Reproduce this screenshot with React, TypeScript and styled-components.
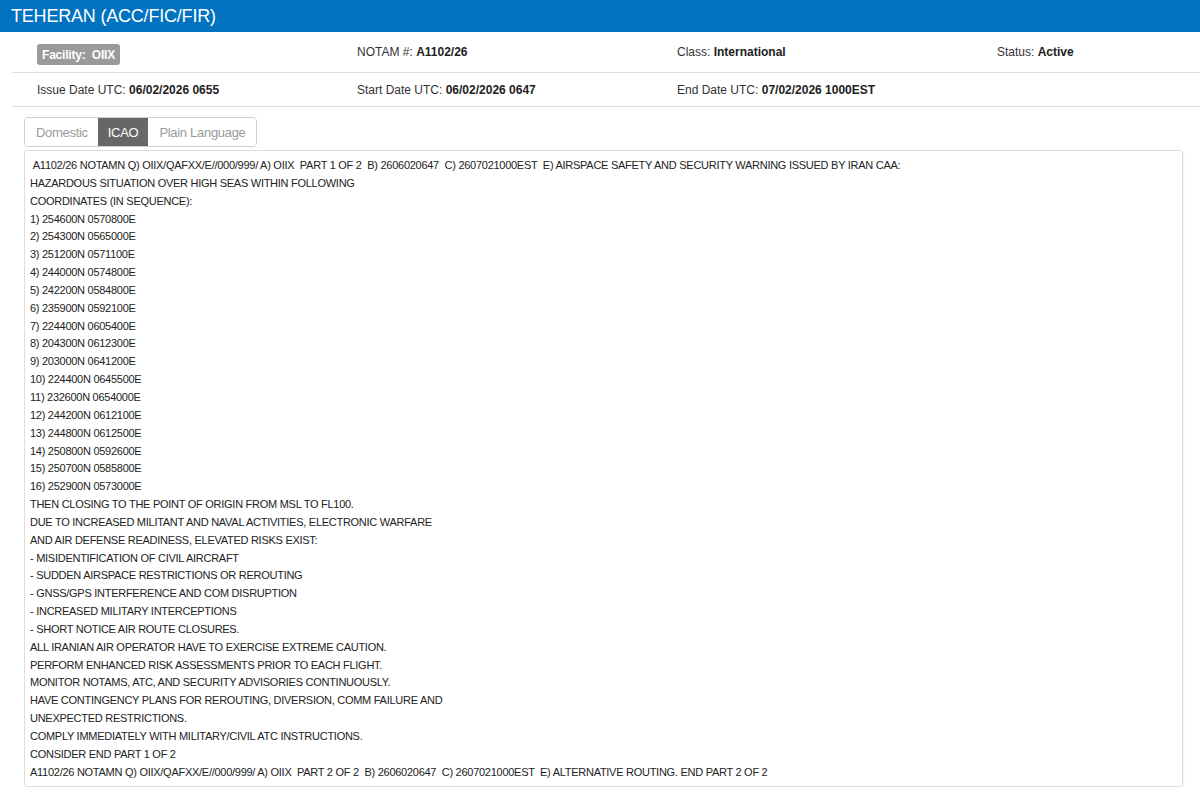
import React from "react";
import styled, { createGlobalStyle } from "styled-components";

const GlobalStyle = createGlobalStyle`
  html, body {
    margin: 0;
    padding: 0;
    background: #ffffff;
    font-family: "Liberation Sans", Arial, sans-serif;
    color: #333333;
  }
`;

const Page = styled.div`
  width: 1200px;
  overflow: hidden;
`;

const TitleBar = styled.header`
  height: 32px;
  background: #0072c0;
  display: flex;
  align-items: center;
  padding-left: 11px;
  box-sizing: border-box;
`;

const Title = styled.h1`
  margin: 0;
  font-size: 18px;
  font-weight: normal;
  color: #ffffff;
  letter-spacing: -0.2px;
`;

const Meta = styled.section`
  padding-left: 12px;
`;

const MetaRow = styled.div<{ $height: number }>`
  height: ${(p) => p.$height}px;
  display: grid;
  grid-template-columns: repeat(4, 320px);
  align-items: center;
  padding-left: 25px;
  border-bottom: 1px solid #dcdcdc;
  box-sizing: border-box;
  font-size: 12px;
  color: #333333;
`;

const Field = styled.div`
  white-space: nowrap;
`;

const Value = styled.b`
  color: #222222;
`;

const Badge = styled.span`
  display: inline-flex;
  align-items: center;
  height: 21px;
  margin-top: 5px;
  padding: 0 5px;
  border-radius: 3px;
  background: #9a9a9a;
  color: #ffffff;
  font-size: 12px;
  font-weight: bold;
  letter-spacing: -0.2px;
`;

const Content = styled.section`
  padding: 10px 17px 0 24px;
`;

const Tabs = styled.div`
  display: inline-flex;
  height: 30px;
  border: 1px solid #cfcfcf;
  border-radius: 4px;
  box-sizing: border-box;
  overflow: hidden;
`;

const Tab = styled.div<{ $active?: boolean }>`
  display: flex;
  align-items: center;
  padding: ${(p) => (p.$active ? "0 10px" : "0 10px 0 11px")};
  font-size: 13px;
  letter-spacing: -0.3px;
  background: ${(p) => (p.$active ? "#676767" : "#ffffff")};
  color: ${(p) => (p.$active ? "#ffffff" : "#9a9a9a")};
`;

const NoticeBox = styled.pre`
  margin: 3px 0 0 0;
  padding: 6px 6px 4px 5px;
  border: 1px solid #dedede;
  border-radius: 3px;
  box-shadow: 1px 1px 2px rgba(0, 0, 0, 0.06);
  font-family: "Liberation Sans", Arial, sans-serif;
  font-size: 11px;
  line-height: 17.85px;
  color: #222222;
  white-space: pre-wrap;
  letter-spacing: -0.27px;
`;

const noticeText = ` A1102/26 NOTAMN Q) OIIX/QAFXX/E//000/999/ A) OIIX  PART 1 OF 2  B) 2606020647  C) 2607021000EST  E) AIRSPACE SAFETY AND SECURITY WARNING ISSUED BY IRAN CAA:
HAZARDOUS SITUATION OVER HIGH SEAS WITHIN FOLLOWING
COORDINATES (IN SEQUENCE):
1) 254600N 0570800E
2) 254300N 0565000E
3) 251200N 0571100E
4) 244000N 0574800E
5) 242200N 0584800E
6) 235900N 0592100E
7) 224400N 0605400E
8) 204300N 0612300E
9) 203000N 0641200E
10) 224400N 0645500E
11) 232600N 0654000E
12) 244200N 0612100E
13) 244800N 0612500E
14) 250800N 0592600E
15) 250700N 0585800E
16) 252900N 0573000E
THEN CLOSING TO THE POINT OF ORIGIN FROM MSL TO FL100.
DUE TO INCREASED MILITANT AND NAVAL ACTIVITIES, ELECTRONIC WARFARE
AND AIR DEFENSE READINESS, ELEVATED RISKS EXIST:
- MISIDENTIFICATION OF CIVIL AIRCRAFT
- SUDDEN AIRSPACE RESTRICTIONS OR REROUTING
- GNSS/GPS INTERFERENCE AND COM DISRUPTION
- INCREASED MILITARY INTERCEPTIONS
- SHORT NOTICE AIR ROUTE CLOSURES.
ALL IRANIAN AIR OPERATOR HAVE TO EXERCISE EXTREME CAUTION.
PERFORM ENHANCED RISK ASSESSMENTS PRIOR TO EACH FLIGHT.
MONITOR NOTAMS, ATC, AND SECURITY ADVISORIES CONTINUOUSLY.
HAVE CONTINGENCY PLANS FOR REROUTING, DIVERSION, COMM FAILURE AND
UNEXPECTED RESTRICTIONS.
COMPLY IMMEDIATELY WITH MILITARY/CIVIL ATC INSTRUCTIONS.
CONSIDER END PART 1 OF 2
A1102/26 NOTAMN Q) OIIX/QAFXX/E//000/999/ A) OIIX  PART 2 OF 2  B) 2606020647  C) 2607021000EST  E) ALTERNATIVE ROUTING. END PART 2 OF 2`;

export default function App() {
  return (
    <Page>
      <GlobalStyle />
      <TitleBar>
        <Title>TEHERAN (ACC/FIC/FIR)</Title>
      </TitleBar>
      <Meta>
        <MetaRow $height={41}>
          <Field>
            <Badge>Facility:&nbsp; OIIX</Badge>
          </Field>
          <Field>
            NOTAM #: <Value>A1102/26</Value>
          </Field>
          <Field>
            Class: <Value>International</Value>
          </Field>
          <Field>
            Status: <Value>Active</Value>
          </Field>
        </MetaRow>
        <MetaRow $height={34}>
          <Field>
            Issue Date UTC: <Value>06/02/2026 0655</Value>
          </Field>
          <Field>
            Start Date UTC: <Value>06/02/2026 0647</Value>
          </Field>
          <Field>
            End Date UTC: <Value>07/02/2026 1000EST</Value>
          </Field>
          <Field />
        </MetaRow>
      </Meta>
      <Content>
        <Tabs>
          <Tab>Domestic</Tab>
          <Tab $active>ICAO</Tab>
          <Tab>Plain Language</Tab>
        </Tabs>
        <NoticeBox>{noticeText}</NoticeBox>
      </Content>
    </Page>
  );
}
